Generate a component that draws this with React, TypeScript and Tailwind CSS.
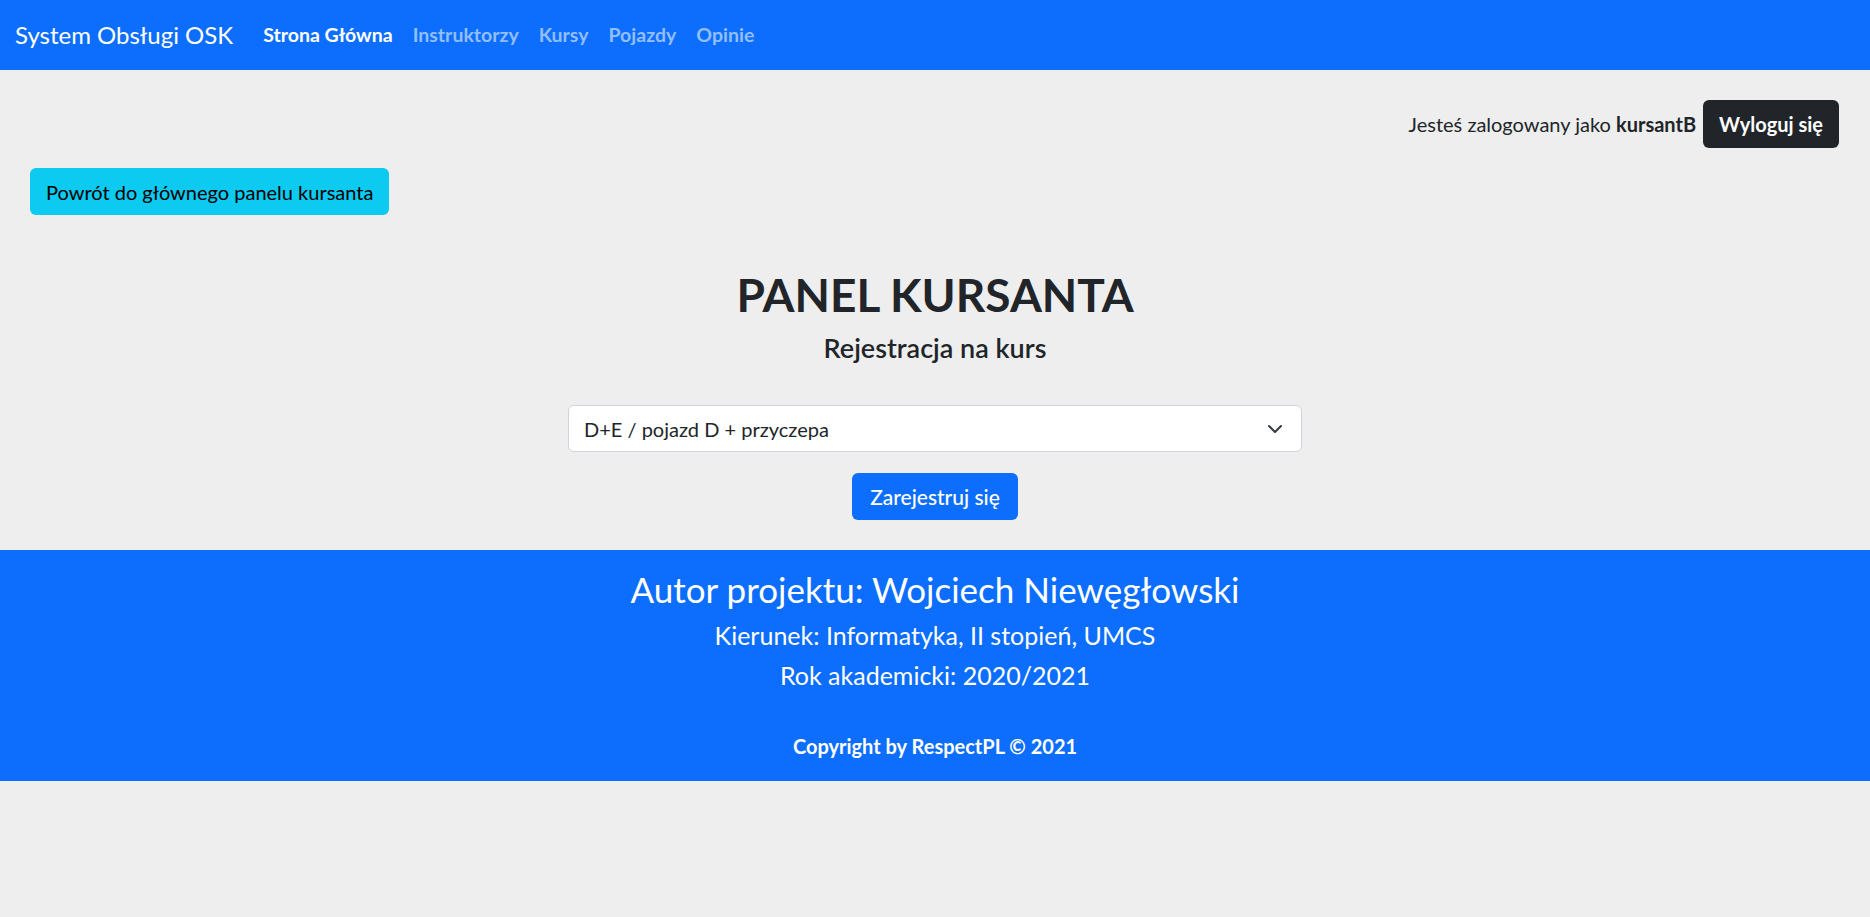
import React from "react";

export default function App() {
  const font = { fontFamily: '"Lato", "Noto Sans", sans-serif' };
  return (
    <div className="min-h-[917px] bg-[#eeeeee] text-[#212529]" style={font}>
      <nav className="h-[70px] bg-[#0d6efd] flex items-center px-[15px]">
        <span className="text-[24px] text-white mr-[20px] leading-none">System Obsługi OSK</span>
        <div className="flex items-center text-[19.5px] font-bold">
          <span className="px-[10px] text-white">Strona Główna</span>
          <span className="px-[10px] text-[#92befe]">Instruktorzy</span>
          <span className="px-[10px] text-[#92befe]">Kursy</span>
          <span className="px-[10px] text-[#92befe]">Pojazdy</span>
          <span className="px-[10px] text-[#92befe]">Opinie</span>
        </div>
      </nav>

      <div className="flex justify-end items-center pr-[31px] pt-[30px] gap-[7px]">
        <span className="text-[20px]">
          Jesteś zalogowany jako <span className="font-bold">kursantB</span>
        </span>
        <button className="h-[48px] px-[16px] rounded-[6px] bg-[#212529] text-white text-[20px] font-bold">
          Wyloguj się
        </button>
      </div>

      <div className="pl-[30px] pt-[20px]">
        <button className="h-[47px] px-[16px] rounded-[6px] bg-[#0dcaf0] text-black text-[20px]">
          Powrót do głównego panelu kursanta
        </button>
      </div>

      <div className="flex flex-col items-center pt-[50px]">
        <h1 className="text-[46px] leading-[60px] font-bold">PANEL KURSANTA</h1>
        <h5 className="text-[27px] leading-[30px] font-semibold mt-[8px]">Rejestracja na kurs</h5>
        <div className="mt-[42px] w-[734px] h-[47px] bg-white border border-[#ced4da] rounded-[6px] flex items-center justify-between pl-[15px] pr-[18px]">
          <span className="text-[20px]">D+E / pojazd D + przyczepa</span>
          <svg width="16" height="16" viewBox="0 0 16 16" fill="none" stroke="#343a40" strokeWidth="2" strokeLinecap="round" strokeLinejoin="round">
            <path d="M2 5l6 6 6-6" />
          </svg>
        </div>
        <button className="mt-[21px] h-[47px] px-[18px] rounded-[6px] bg-[#0d6efd] text-white text-[21px] font-medium">
          Zarejestruj się
        </button>
      </div>

      <footer className="mt-[30px] h-[231px] bg-[#0d6efd] text-white flex flex-col items-center pt-[18px]">
        <div className="text-[35px] leading-[42px]">Autor projektu: Wojciech Niewęgłowski</div>
        <div className="text-[25px] leading-[30px] mt-[10px]">Kierunek: Informatyka, II stopień, UMCS</div>
        <div className="text-[25px] leading-[30px] mt-[10px]">Rok akademicki: 2020/2021</div>
        <div className="text-[20px] leading-[30px] font-bold mt-[41px]">Copyright by RespectPL © 2021</div>
      </footer>
    </div>
  );
}
